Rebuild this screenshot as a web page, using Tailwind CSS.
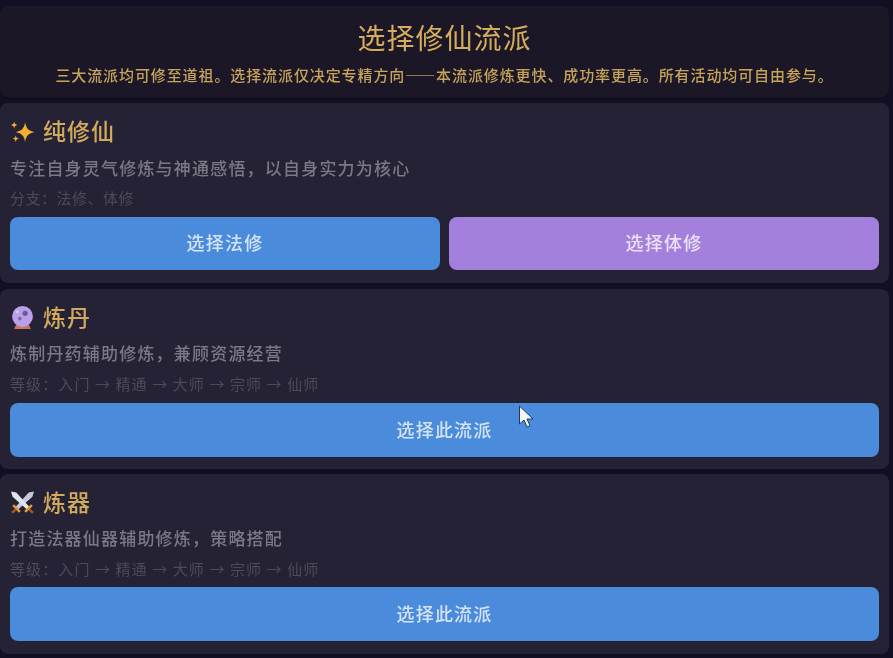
<!DOCTYPE html>
<html lang="zh">
<head>
    <meta charset="utf-8" />
    <title>选择修仙流派</title>
    <script src="https://cdn.jsdelivr.net/npm/@tailwindcss/browser@4"></script>
</head>
<body class="bg-[#130f22] font-['Noto_Sans_CJK_SC','Noto_Sans',sans-serif] overflow-hidden">
    <div class="relative h-[658px] w-[893px] pt-[6px] pr-[4px] flex flex-col gap-[6px] blur-[0.6px]">
        <!-- 标题 -->
        <header class="h-[91px] rounded-lg bg-[#1c1727] pt-[13px] text-center text-[#d6ad5c]">
            <h1 class="text-[28px] leading-[36px] tracking-[1px] font-normal">选择修仙流派</h1>
            <p class="mt-[10px] text-[15px] leading-[20px] tracking-[0.9px] font-medium text-[#c7a45a]">三大流派均可修至道祖。选择流派仅决定专精方向——本流派修炼更快、成功率更高。所有活动均可自由参与。</p>
        </header>

        <!-- 纯修仙 -->
        <section class="h-[180px] rounded-lg bg-[#252236] px-[10px] pt-[12px]">
            <h2 class="flex items-center gap-[8px] h-[31px] text-[23px] tracking-[1px] font-medium text-[#d2aa5c]">
                <svg class="w-[25px] h-[25px] shrink-0 translate-y-[1px]" viewBox="0 0 24 24" fill="#f5b02e">
                    <path d="M14.500 3c.9 5.800 3 8 9 9.500-6 1.500-8.100 3.700-9 9.500-.9-5.800-3-8-9-9.500 6-1.500 8.100-3.700 9-9.500z"/>
                    <path d="M4 2.500c.4 2.100 1.200 2.900 3.200 3.300-2 .4-2.800 1.200-3.200 3.300-.4-2.100-1.200-2.900-3.200-3.300 2-.4 2.800-1.200 3.200-3.300z"/>
                    <path d="M5.500 15.500c.4 2.100 1.200 2.900 3.200 3.300-2 .4-2.800 1.200-3.200 3.300-.4-2.100-1.200-2.900-3.200-3.300 2-.4 2.800-1.200 3.200-3.300z"/>
                </svg>
                纯修仙
            </h2>
            <p class="mt-[9px] h-[26px] text-[17px] leading-[26px] tracking-[1.200px] font-medium text-[#7b7985]">专注自身灵气修炼与神通感悟&#xFF0C;以自身实力为核心</p>
            <p class="mt-[7px] h-[20px] text-[15px] leading-[20px] tracking-[0.500px] text-[#4d4b5a]">分支&#xFF1A;法修、体修</p>
            <div class="mt-[9px] grid grid-cols-2 gap-[9px]">
                <button class="h-[53px] pb-[2px] rounded-lg bg-[#4a8bdc] text-[18px] tracking-[1.200px] font-medium text-[#d5e4f7]">选择法修</button>
                <button class="h-[53px] pb-[2px] rounded-lg bg-[#a280dc] text-[18px] tracking-[1.200px] font-medium text-[#ebe1f8]">选择体修</button>
            </div>
        </section>

        <!-- 炼丹 -->
        <section class="h-[180px] rounded-lg bg-[#252236] px-[10px] pt-[12px]">
            <h2 class="flex items-center gap-[8px] h-[31px] text-[23px] tracking-[1px] font-medium text-[#d2aa5c]">
                <svg class="w-[25px] h-[25px] shrink-0 translate-y-[1px]" viewBox="0 0 24 24">
                    <path d="M6 18.500h12l2 4.500H4z" fill="#c9785a"/>
                    <circle cx="12" cy="11" r="10" fill="#b9a0e8"/>
                    <circle cx="14.500" cy="8" r="2.600" fill="#6a5a9c"/>
                    <circle cx="9.500" cy="13" r="1.800" fill="#7d6bb0"/>
                    <circle cx="7" cy="6.500" r="1.500" fill="#d8ccf4"/>
                </svg>
                炼丹
            </h2>
            <p class="mt-[8px] h-[26px] text-[17px] leading-[26px] tracking-[1.200px] font-medium text-[#7b7985]">炼制丹药辅助修炼&#xFF0C;兼顾资源经营</p>
            <p class="mt-[8px] h-[20px] text-[15px] leading-[20px] tracking-[1.100px] text-[#4d4b5a]">等级&#xFF1A;入门 → 精通 → 大师 → 宗师 → 仙师</p>
            <button class="mt-[9px] w-full h-[54px] pb-[2px] rounded-lg bg-[#4a8bdc] text-[18px] tracking-[1.200px] font-medium text-[#d5e4f7]">选择此流派</button>
        </section>

        <!-- 炼器 -->
        <section class="h-[180px] -mt-[1px] rounded-lg bg-[#252236] px-[10px] pt-[12px]">
            <h2 class="flex items-center gap-[8px] h-[31px] text-[23px] tracking-[1px] font-medium text-[#d2aa5c]">
                <svg class="w-[25px] h-[25px] shrink-0 translate-y-[1px]" viewBox="0 0 24 24" fill="none">
                    <path d="M23 1.500l-5 1L5.500 16l2.500 2.500L21.500 6.500z" fill="#c3ccd8"/>
                    <path d="M1 1.500l5 1L18.500 16 16 18.500 2.500 6.500z" fill="#dfe5ee"/>
                    <path d="M3 14.500l6.500 6.500M21 14.500L14.500 21" stroke="#e09a3c" stroke-width="2.400"/>
                    <path d="M5.500 18.500L2 22M18.500 18.500L22 22" stroke="#a8552c" stroke-width="2.400"/>
                </svg>
                炼器
            </h2>
            <p class="mt-[8px] h-[26px] text-[17px] leading-[26px] tracking-[1.200px] font-medium text-[#7b7985]">打造法器仙器辅助修炼&#xFF0C;策略搭配</p>
            <p class="mt-[8px] h-[20px] text-[15px] leading-[20px] tracking-[1.100px] text-[#4d4b5a]">等级&#xFF1A;入门 → 精通 → 大师 → 宗师 → 仙师</p>
            <button class="mt-[8px] w-full h-[54px] pb-[2px] rounded-lg bg-[#4a8bdc] text-[18px] tracking-[1.200px] font-medium text-[#d5e4f7]">选择此流派</button>
        </section>

        <!-- 鼠标指针 -->
        <svg class="absolute left-[518px] top-[405px] w-[16px] h-[25px]" viewBox="0 0 16 25">
            <path d="M1.500 1v18l4.500-4 3 7 3-1.300-3-6.700h6z" fill="#f4f6fa" stroke="#1f3a66" stroke-width="1"/>
        </svg>
    </div>
</body>
</html>
